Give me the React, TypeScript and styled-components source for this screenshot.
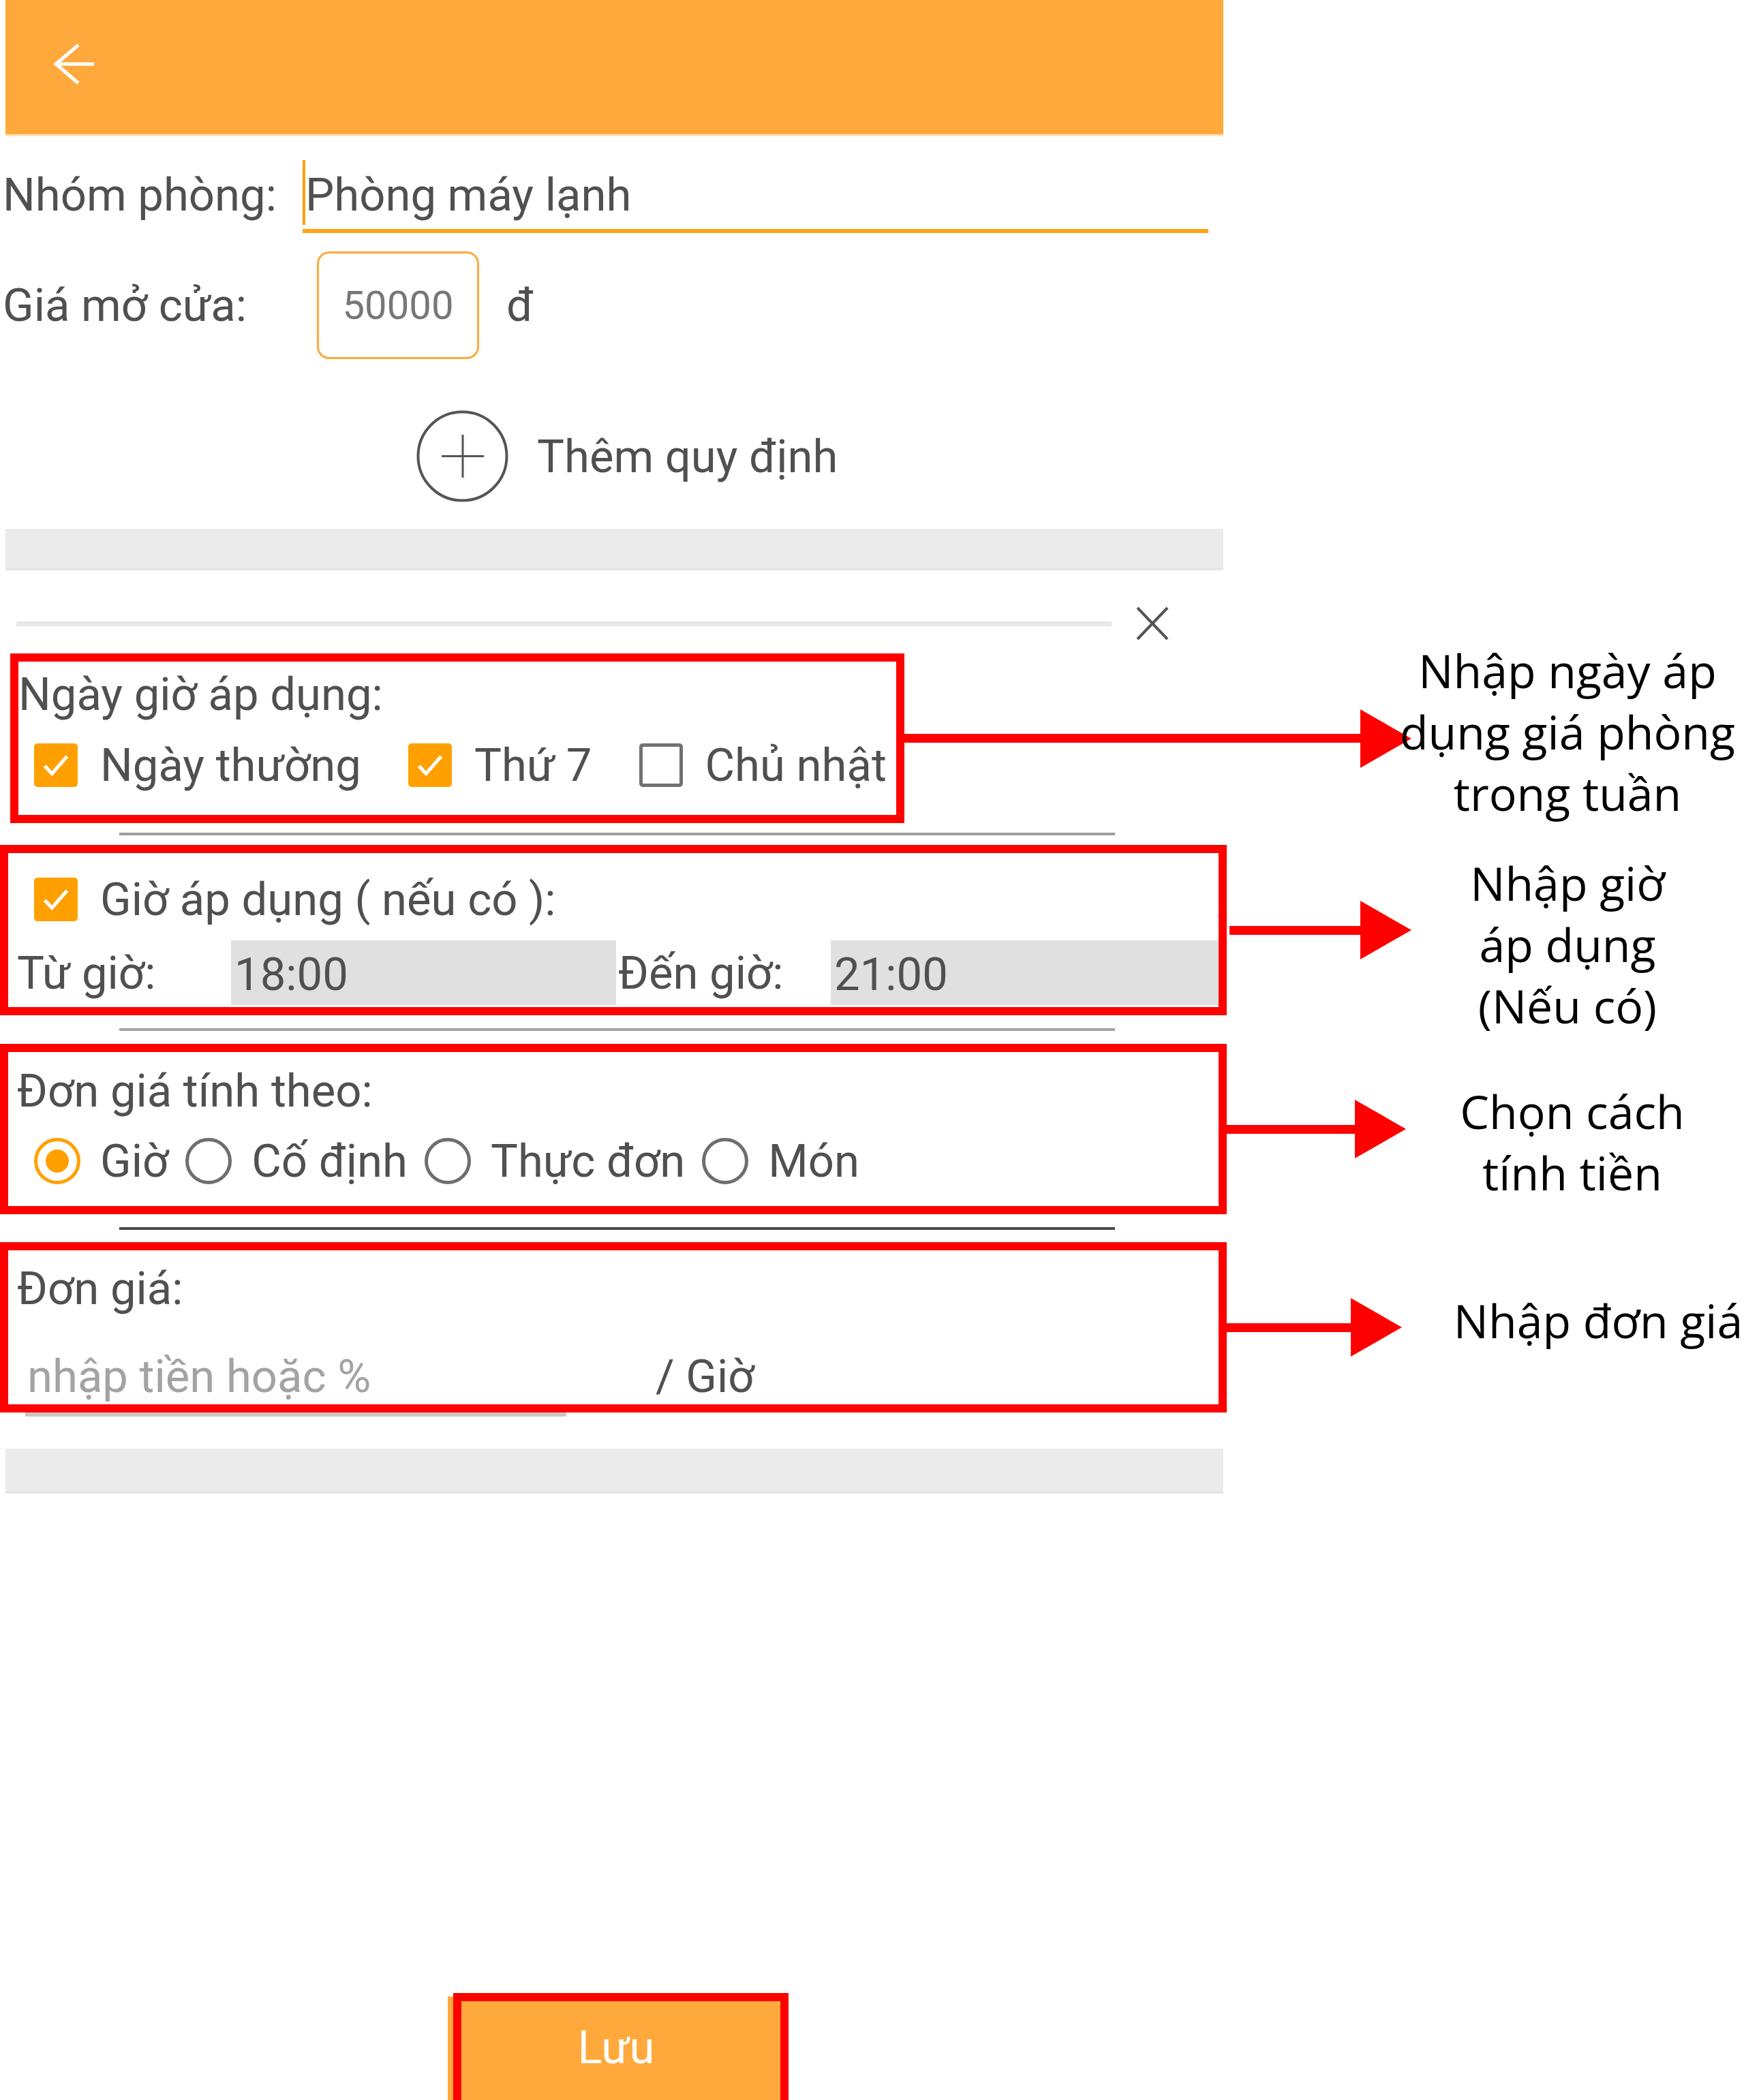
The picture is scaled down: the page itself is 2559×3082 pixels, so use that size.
import React from 'react';
import styled, { createGlobalStyle } from 'styled-components';

const ORANGE = '#FFA93C';
const CHECK_ORANGE = '#FFA000';
const RED = '#FF0000';
const TEXT = '#505050';

const GlobalStyle = createGlobalStyle`
  *, *::before, *::after { box-sizing: border-box; }
  html, body { margin: 0; padding: 0; background: #fff; overflow: hidden; }
  body { font-family: Roboto, "Noto Sans", sans-serif; }
`;

const Page = styled.div`
  display: flex;
  flex-direction: column;
  color: ${TEXT};
  font-family: Roboto, 'Noto Sans', sans-serif;
  font-size: 67px;
`;

const Header = styled.header`
  flex: none;
  margin-left: 8px;
  width: 1787px;
  height: 200px;
  background: ${ORANGE};
  border-bottom: 3px solid #ffe2ba;
  display: flex;
  align-items: center;
  padding: 0 0 10px 70px;
`;

const FormRow = styled.div<{ $mt?: number; $pt?: number; $h?: number; $top?: boolean }>`
  flex: none;
  display: flex;
  align-items: ${(p) => (p.$top ? 'flex-start' : 'center')};
  margin-top: ${(p) => p.$mt ?? 0}px;
  padding-top: ${(p) => p.$pt ?? 0}px;
  padding-left: 4px;
  height: ${(p) => (p.$h ? `${p.$h}px` : 'auto')};
`;

const FieldLabel = styled.span<{ $w: number }>`
  flex: none;
  width: ${(p) => p.$w}px;
  line-height: 80px;
  white-space: nowrap;
`;

const NameInput = styled.div`
  position: relative;
  width: 1329px;
  height: 96px;
  padding: 0 0 10px 4px;
  line-height: 80px;
  border-bottom: 6px solid #ffa31a;
  white-space: nowrap;

  &::before {
    content: '';
    position: absolute;
    left: 0;
    top: -11px;
    width: 4px;
    height: 95px;
    background: ${CHECK_ORANGE};
  }
`;

const PriceBox = styled.div`
  flex: none;
  width: 238px;
  height: 158px;
  border: 3px solid ${ORANGE};
  border-radius: 18px;
  display: flex;
  align-items: center;
  justify-content: center;
  color: #777;
  font-size: 58px;
`;

const Currency = styled.span`
  margin-left: 40px;
  line-height: 80px;
`;

const AddRule = styled.div`
  flex: none;
  display: flex;
  align-items: center;
  gap: 42px;
  margin: 75px 0 0 611px;
  height: 135px;
  white-space: nowrap;
`;

const GrayBand = styled.div<{ $mt: number; $h: number }>`
  flex: none;
  margin: ${(p) => p.$mt}px 0 0 8px;
  width: 1787px;
  height: ${(p) => p.$h}px;
  background: #ebebeb;
  border-bottom: 3px solid #e3e3e3;
`;

const CloseRow = styled.div`
  flex: none;
  display: flex;
  align-items: center;
  margin: 51px 0 0 24px;
  height: 54px;
`;

const FaintLine = styled.div`
  width: 1607px;
  height: 7px;
  background: #e8e8e8;
  margin-right: 34px;
`;

const Divider = styled.div<{ $tone: string; $mt: number }>`
  flex: none;
  margin: ${(p) => p.$mt}px 0 0 175px;
  width: 1461px;
  height: 4px;
  background: ${(p) => p.$tone};
`;

const NoteRow = styled.div<{ $mt: number }>`
  flex: none;
  display: flex;
  align-items: center;
  margin-top: ${(p) => p.$mt}px;
`;

const Highlight = styled.section<{ $w: number; $ml?: number; $h?: number; $pt: number; $gap: number }>`
  flex: none;
  width: ${(p) => p.$w}px;
  height: ${(p) => p.$h ?? 250}px;
  margin-left: ${(p) => p.$ml ?? 0}px;
  border: 12px solid ${RED};
  padding-top: ${(p) => p.$pt}px;
  display: flex;
  flex-direction: column;
  gap: ${(p) => p.$gap}px;
`;

const Line = styled.div<{ $pl?: number }>`
  display: flex;
  align-items: center;
  height: 80px;
  line-height: 80px;
  padding-left: ${(p) => p.$pl ?? 0}px;
  white-space: nowrap;
`;

const OptionGroup = styled(Line)<{ $gap: number }>`
  gap: ${(p) => p.$gap}px;
`;

const Option = styled.label<{ $gap: number }>`
  display: flex;
  align-items: center;
  gap: ${(p) => p.$gap}px;
`;

const CheckBox = styled.span<{ $checked?: boolean }>`
  flex: none;
  width: 64px;
  height: 64px;
  border-radius: 5px;
  display: inline-flex;
  align-items: center;
  justify-content: center;
  background: ${(p) => (p.$checked ? CHECK_ORANGE : 'transparent')};
  border: ${(p) => (p.$checked ? 'none' : '5px solid #707070')};
`;

const Radio = styled.span<{ $on?: boolean }>`
  flex: none;
  width: 68px;
  height: 68px;
  border-radius: 50%;
  border: 5px solid ${(p) => (p.$on ? CHECK_ORANGE : '#6e6e6e')};
  display: inline-flex;
  align-items: center;
  justify-content: center;

  &::after {
    content: '';
    width: 34px;
    height: 34px;
    border-radius: 50%;
    background: ${(p) => (p.$on ? CHECK_ORANGE : 'transparent')};
  }
`;

const TimeGrid = styled.div`
  display: grid;
  grid-template-columns: 314px 565px 315px 1fr;
  height: 95px;
  padding-left: 13px;
  align-items: center;
  white-space: nowrap;
`;

const TimeLabel = styled.span<{ $pl?: number }>`
  padding-left: ${(p) => p.$pl ?? 0}px;
`;

const TimeField = styled.div`
  height: 100%;
  display: flex;
  align-items: center;
  padding: 4px 0 0 5px;
  background: #e0e0e0;
`;

const Placeholder = styled.span`
  width: 922px;
  color: #a3a3a3;
`;

const InputLine = styled.div`
  flex: none;
  margin-left: 37px;
  width: 794px;
  height: 6px;
  background: #c8c8c8;
`;

const Arrow = styled.div<{ $len: number; $ml?: number }>`
  flex: none;
  display: flex;
  align-items: center;
  width: ${(p) => p.$len}px;
  margin-left: ${(p) => p.$ml ?? 0}px;
`;

const Shaft = styled.div`
  flex: 1;
  height: 13px;
  background: ${RED};
`;

const Head = styled.div`
  flex: none;
  width: 0;
  height: 0;
  border-left: 75px solid ${RED};
  border-top: 43px solid transparent;
  border-bottom: 43px solid transparent;
`;

const Note = styled.div<{ $dy?: number; $shift?: number }>`
  flex: 1;
  margin: ${(p) => -40 + (p.$dy ?? 0)}px 0 ${(p) => -40 - (p.$dy ?? 0)}px -30px;
  padding-left: ${(p) => (p.$shift ?? 0) * 2}px;
  font-family: 'Open Sans', 'Noto Sans', sans-serif;
  font-size: 68px;
  line-height: 90px;
  color: #000;
  text-align: center;
  white-space: nowrap;
`;

const SaveFrame = styled.div`
  flex: none;
  margin: 733px 0 0 657px;
  width: 500px;
  height: 157px;
  padding-left: 8px;
  background: linear-gradient(to bottom, transparent 5px, ${ORANGE} 5px);
`;

const SaveButton = styled.button`
  width: 100%;
  height: 100%;
  border: 12px solid ${RED};
  border-bottom: none;
  background: ${ORANGE};
  color: #fff;
  font-family: Roboto, 'Noto Sans', sans-serif;
  font-size: 67px;
  line-height: 80px;
  display: flex;
  justify-content: center;
  align-items: flex-start;
  padding: 28px 14px 0 0;
`;

const CheckMark = () => (
  <svg width="56" height="56" viewBox="0 0 24 24" fill="none">
    <path d="M5 12.5l4.5 4.8L19 6.5" stroke="#fff" strokeWidth="2.2" />
  </svg>
);

const Check = ({ checked, label }: { checked?: boolean; label: string }) => (
  <Option $gap={33}>
    <CheckBox $checked={checked}>{checked && <CheckMark />}</CheckBox>
    {label}
  </Option>
);

const RadioItem = ({ on, label }: { on?: boolean; label: string }) => (
  <Option $gap={29}>
    <Radio $on={on} />
    {label}
  </Option>
);

const Annotation = ({
  len,
  ml,
  dy,
  shift,
  lines,
}: {
  len: number;
  ml?: number;
  dy?: number;
  shift?: number;
  lines: string[];
}) => (
  <>
    <Arrow $len={len} $ml={ml}>
      <Shaft />
      <Head />
    </Arrow>
    <Note $dy={dy} $shift={shift}>
      {lines.map((l) => (
        <div key={l}>{l}</div>
      ))}
    </Note>
  </>
);

export default function App() {
  return (
    <>
      <GlobalStyle />
      <Page>
        <Header>
          <svg width="62" height="60" viewBox="0 0 62 60" fill="none">
            <path d="M60 30H5M37 2L4 30l33 28" stroke="#fff" strokeWidth="5" />
          </svg>
        </Header>

        <FormRow $pt={46} $top>
          <FieldLabel $w={440}>Nhóm phòng:</FieldLabel>
          <NameInput>Phòng máy lạnh</NameInput>
        </FormRow>

        <FormRow $mt={27} $h={158}>
          <FieldLabel $w={461}>Giá mở cửa:</FieldLabel>
          <PriceBox>50000</PriceBox>
          <Currency>đ</Currency>
        </FormRow>

        <AddRule>
          <svg width="135" height="135" viewBox="0 0 135 135" fill="none">
            <circle cx="67.5" cy="67.5" r="65" stroke="#555" strokeWidth="4" />
            <path d="M68 36v63M37 67.5h62" stroke="#555" strokeWidth="3" />
          </svg>
          Thêm quy định
        </AddRule>

        <GrayBand $mt={39} $h={61} />

        <CloseRow>
          <FaintLine />
          <svg width="52" height="54" viewBox="0 0 52 54" fill="none">
            <path d="M4 4l44 46M48 4L4 50" stroke="#555" strokeWidth="4" />
          </svg>
        </CloseRow>

        <NoteRow $mt={17}>
          <Highlight $w={1312} $ml={15} $h={249} $pt={8} $gap={24}>
            <Line>Ngày giờ áp dụng:</Line>
            <OptionGroup $pl={23} $gap={69}>
              <Check checked label="Ngày thường" />
              <Check checked label="Thứ 7" />
              <Check label="Chủ nhật" />
            </OptionGroup>
          </Highlight>
          <Annotation len={744} dy={-10} lines={['Nhập ngày áp', 'dụng giá phòng', 'trong tuần']} />
        </NoteRow>

        <Divider $mt={14} $tone="#9e9e9e" />

        <NoteRow $mt={14}>
          <Highlight $w={1800} $pt={28} $gap={20}>
            <Line $pl={38}>
              <Check checked label="Giờ áp dụng ( nếu có ):" />
            </Line>
            <TimeGrid>
              <TimeLabel>Từ giờ:</TimeLabel>
              <TimeField>18:00</TimeField>
              <TimeLabel $pl={3}>Đến giờ:</TimeLabel>
              <TimeField>21:00</TimeField>
            </TimeGrid>
          </Highlight>
          <Annotation len={267} ml={4} dy={21} lines={['Nhập giờ', 'áp dụng', '(Nếu có)']} />
        </NoteRow>

        <Divider $mt={19} $tone="#a3a3a3" />

        <NoteRow $mt={19}>
          <Highlight $w={1800} $pt={17} $gap={23}>
            <Line $pl={13}>Đơn giá tính theo:</Line>
            <OptionGroup $pl={38} $gap={25}>
              <RadioItem on label="Giờ" />
              <RadioItem label="Cố định" />
              <RadioItem label="Thực đơn" />
              <RadioItem label="Món" />
            </OptionGroup>
          </Highlight>
          <Annotation len={263} dy={19} shift={11} lines={['Chọn cách', 'tính tiền']} />
        </NoteRow>

        <Divider $mt={19} $tone="#4a4a4a" />

        <NoteRow $mt={18}>
          <Highlight $w={1800} $pt={16} $gap={49}>
            <Line $pl={13}>Đơn giá:</Line>
            <Line $pl={28}>
              <Placeholder>nhập tiền hoặc %</Placeholder>
              <span>/ Giờ</span>
            </Line>
          </Highlight>
          <Annotation len={257} dy={-10} shift={52} lines={['Nhập đơn giá']} />
        </NoteRow>
        <InputLine />

        <GrayBand $mt={47} $h={66} />

        <SaveFrame>
          <SaveButton>Lưu</SaveButton>
        </SaveFrame>
      </Page>
    </>
  );
}
